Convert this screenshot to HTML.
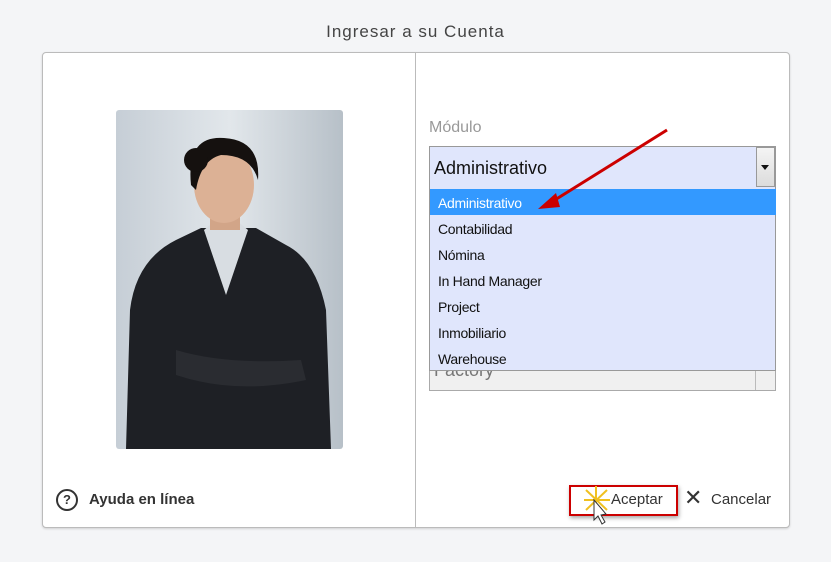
<!DOCTYPE html>
<html><head><style>
body{margin:0;width:831px;height:562px;background:#f4f5f7;font-family:"Liberation Sans",sans-serif;position:relative;overflow:hidden}
.a{position:absolute}
.row{position:absolute;left:8px;font-size:14px;color:#111;height:26px;line-height:28px;letter-spacing:-0.3px}
</style></head><body>
<div class="a" style="left:0;width:831px;top:22px;text-align:center;font-size:17px;color:#444;letter-spacing:1px">Ingresar a su Cuenta</div>
<div class="a" style="left:42px;top:52px;width:746px;height:474px;background:#fff;border:1px solid #bbb;border-radius:4px;box-shadow:0 1px 2px rgba(0,0,0,.15)"></div>
<div class="a" style="left:415px;top:53px;width:1px;height:474px;background:#bbb"></div>
<svg class="a" style="left:116px;top:110px;border-radius:3px" width="227" height="339" viewBox="0 0 227 339">
<defs><linearGradient id="g" x1="0" x2="1"><stop offset="0" stop-color="#c6ced6"/><stop offset=".5" stop-color="#e2e7eb"/><stop offset="1" stop-color="#b7c0c8"/></linearGradient></defs>
<rect width="227" height="339" fill="url(#g)"/>
<path d="M10 339 L14 200 Q20 150 60 130 L85 118 L140 118 L170 135 Q200 150 210 200 L215 339Z" fill="#1e2025"/>
<path d="M88 120 L110 185 L132 120 L120 110 L100 110Z" fill="#d8dde2"/>
<path d="M60 240 Q110 255 185 250 L190 270 Q120 285 60 265Z" fill="#2a2c31"/>
<rect x="94" y="95" width="30" height="25" fill="#d2a588"/>
<ellipse cx="108" cy="75" rx="30" ry="38" fill="#dcb195"/>
<path d="M75 75 Q70 25 108 28 Q145 30 142 70 Q135 45 105 45 Q85 50 80 80Z" fill="#15110f"/>
<ellipse cx="80" cy="50" rx="12" ry="12" fill="#15110f"/>
</svg>
<div class="a" style="left:429px;top:119px;font-size:16px;color:#999">Módulo</div>
<div class="a" style="left:429px;top:340px;width:347px;height:51px;background:#f0f0f0;border:1px solid #aaa;color:#777;font-size:18px;line-height:58px;padding-left:4px;box-sizing:border-box;overflow:hidden">Factory</div>
<div class="a" style="left:755px;top:341px;width:20px;height:49px;border-left:1px solid #bbb"></div>
<div class="a" style="left:429px;top:146px;width:347px;height:43px;background:#e0e6fc;border:1px solid #999;box-sizing:border-box"></div>
<div class="a" style="left:434px;top:158px;font-size:18px;color:#111">Administrativo</div>
<div class="a" style="left:756px;top:147px;width:19px;height:40px;background:linear-gradient(#f4f4f4,#dcdcdc);border:1px solid #999;box-sizing:border-box"></div>
<div class="a" style="left:761px;top:165px;width:0;height:0;border-left:4px solid transparent;border-right:4px solid transparent;border-top:5px solid #111"></div>
<div class="a" style="left:429px;top:188px;width:347px;height:183px;background:#e0e6fc;border:1px solid #999;border-top:none;box-sizing:border-box">
<div class="a" style="left:0;top:1px;width:346px;height:26px;background:#3399ff"></div>
<div class="row" style="top:1px;color:#fff">Administrativo</div>
<div class="row" style="top:27px">Contabilidad</div>
<div class="row" style="top:53px">Nómina</div>
<div class="row" style="top:79px">In Hand Manager</div>
<div class="row" style="top:105px">Project</div>
<div class="row" style="top:131px">Inmobiliario</div>
<div class="row" style="top:157px">Warehouse</div>
</div>
<svg class="a" style="left:530px;top:125px" width="150" height="90"><line x1="137" y1="5" x2="20" y2="78" stroke="#c00" stroke-width="3"/><path d="M8 84 L26 68 L30 82Z" fill="#c00"/></svg>
<div class="a" style="left:56px;top:489px;width:22px;height:22px;border:2px solid #333;border-radius:50%;box-sizing:border-box;text-align:center;font-size:13px;font-weight:bold;line-height:18px;color:#333">?</div>
<div class="a" style="left:89px;top:491px;font-size:15px;font-weight:bold;color:#333">Ayuda en línea</div>
<div class="a" style="left:569px;top:485px;width:109px;height:31px;border:2px solid #c00;box-sizing:border-box;box-shadow:1px 2px 4px rgba(0,0,0,.35)"></div>
<svg class="a" style="left:580px;top:484px" width="40" height="44"><g stroke="#f0c020" stroke-width="2"><line x1="16" y1="2" x2="16" y2="30"/><line x1="4" y1="16" x2="30" y2="16"/><line x1="6" y1="6" x2="27" y2="26"/><line x1="27" y1="6" x2="6" y2="26"/></g><path d="M14 16 L14 36 L18 32 L22 40 L25 38 L21 31 L26 30Z" fill="#fff" stroke="#333"/></svg>
<div class="a" style="left:611px;top:491px;font-size:15px;color:#333">Aceptar</div>
<div class="a" style="left:684px;top:485px;font-size:22px;color:#333">✕</div>
<div class="a" style="left:711px;top:491px;font-size:15px;color:#333">Cancelar</div>
</body></html>
